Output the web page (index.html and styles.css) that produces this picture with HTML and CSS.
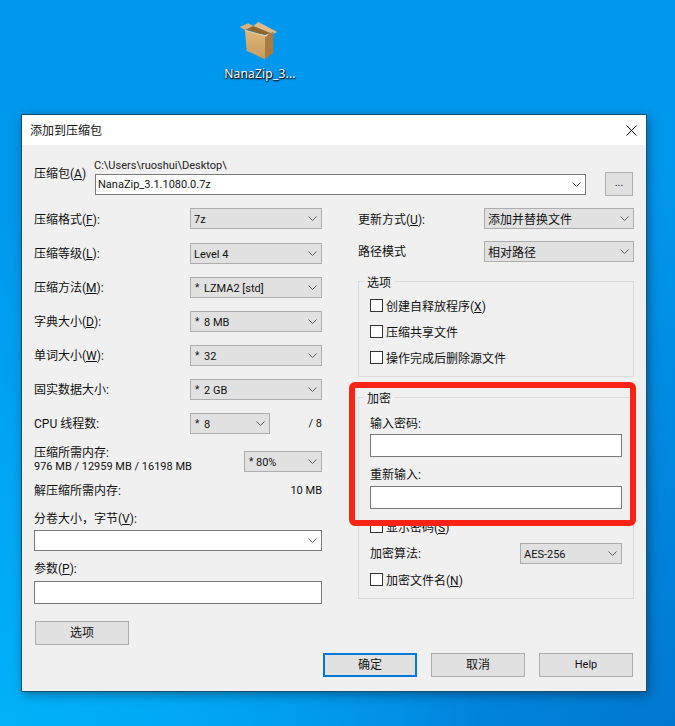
FILE: index.html
```html
<!DOCTYPE html>
<html lang="zh-CN">
<head>
<meta charset="utf-8">
<title>添加到压缩包</title>
<link rel="stylesheet" href="styles.css">
</head>
<body>
<svg width="0" height="0" class="defs">
  <defs>
    <symbol id="chev" viewBox="0 0 9 5"><path d="M.5.5 4.5 4.5 8.5.5" fill="none" stroke="#5a5a5a" stroke-width="1"/></symbol>
    <linearGradient id="boxface" x1="0" y1="0" x2="0" y2="1"><stop offset="0" stop-color="#e0b67e"/><stop offset="1" stop-color="#c89a5c"/></linearGradient>
  </defs>
</svg>
<div class="desktop-icon">
  <svg class="box-icon" viewBox="87 30 126 126" width="42" height="42">
    <polygon points="105,58 148,42 190,65 165,75" fill="#8c6534"/>
    <polygon points="90,50 115,40 130,48 105,60" fill="#d9b07a"/>
    <polygon points="130,48 145,36 202,66 188,72" fill="#e2bc88"/>
    <polygon points="105,60 165,76 165,148 110,122" fill="url(#boxface)"/>
    <polygon points="165,76 190,66 190,128 165,148" fill="#a97b43"/>
    <polygon points="105,60 165,76 178,70 168,80 104,62" fill="#f0d4a6"/>
  </svg>
  <div class="icon-label">NanaZip_3...</div>
</div>

<div class="dialog">
  <div class="titlebar">
    <span class="title">添加到压缩包</span>
    <svg class="close" viewBox="0 0 11 11" width="11" height="11"><path d="M.5.5 10.5 10.5M10.5.5.5 10.5" stroke="#111" stroke-width="1" fill="none"/></svg>
  </div>
  <div class="content">
    <div class="archive">
      <span class="archive-label">压缩包(<u>A</u>)</span>
      <div class="archive-path">
        <div class="path-text lt">C:\Users\ruoshui\Desktop\</div>
        <div class="combo"><span class="lt">NanaZip_3.1.1080.0.7z</span><svg class="chev"><use href="#chev"/></svg></div>
      </div>
      <div class="btn browse">...</div>
    </div>

    <div class="columns">
      <div class="col-left">
        <div class="row first"><span class="lower">压缩格式(<u>F</u>):</span><div class="select w132"><span class="lt">7z</span><svg class="chev"><use href="#chev"/></svg></div></div>
        <div class="row"><span>压缩等级(<u>L</u>):</span><div class="select w132"><span class="lt">Level 4</span><svg class="chev"><use href="#chev"/></svg></div></div>
        <div class="row"><span>压缩方法(<u>M</u>):</span><div class="select w132"><span class="star">*</span><span class="lt">LZMA2 [std]</span><svg class="chev"><use href="#chev"/></svg></div></div>
        <div class="row"><span>字典大小(<u>D</u>):</span><div class="select w132"><span class="star">*</span><span class="lt">8 MB</span><svg class="chev"><use href="#chev"/></svg></div></div>
        <div class="row"><span>单词大小(<u>W</u>):</span><div class="select w132"><span class="star">*</span><span class="lt">32</span><svg class="chev"><use href="#chev"/></svg></div></div>
        <div class="row"><span>固实数据大小:</span><div class="select w132"><span class="star">*</span><span class="lt">2 GB</span><svg class="chev"><use href="#chev"/></svg></div></div>
        <div class="row cpu">
          <span class="cpu-label">CPU 线程数:</span>
          <div class="select w80"><span class="star">*</span><span class="lt">8</span><svg class="chev"><use href="#chev"/></svg></div>
          <span class="cpu-max lt">/ 8</span>
        </div>
        <div class="memory">
          <div class="memory-text">
            <div>压缩所需内存:</div>
            <div class="lt">976 MB / 12959 MB / 16198 MB</div>
          </div>
          <div class="select w78"><span class="star tight">*</span><span class="lt">80%</span><svg class="chev"><use href="#chev"/></svg></div>
        </div>
        <div class="decompress"><span>解压缩所需内存:</span><span class="lt">10 MB</span></div>
        <div class="field-label volume-label">分卷大小，字节(<u>V</u>):</div>
        <div class="combo empty"><svg class="chev"><use href="#chev"/></svg></div>
        <div class="field-label param-label">参数(<u>P</u>):</div>
        <div class="input"></div>
        <div class="btn options-btn">选项</div>
      </div>

      <div class="col-right">
        <div class="row tight-row"><span class="lower">更新方式(<u>U</u>):</span><div class="select w150"><span class="lower">添加并替换文件</span><svg class="chev"><use href="#chev"/></svg></div></div>
        <div class="row tight-row path-row"><span>路径模式</span><div class="select w150"><span class="lower">相对路径</span><svg class="chev"><use href="#chev"/></svg></div></div>

        <fieldset class="group options-group">
          <legend>选项</legend>
          <label class="check"><span class="box"></span>创建自释放程序(<u>X</u>)</label>
          <label class="check"><span class="box"></span>压缩共享文件</label>
          <label class="check"><span class="box"></span>操作完成后删除源文件</label>
        </fieldset>

        <fieldset class="group encrypt-group">
          <legend>加密</legend>
          <div class="enc-label pass-label">输入密码:</div>
          <div class="input enc-input"></div>
          <div class="enc-label again-label">重新输入:</div>
          <div class="input enc-input"></div>
          <label class="check show-pass"><span class="box"></span>显示密码(<u>S</u>)</label>
          <div class="row algo"><span>加密算法:</span><div class="select w102"><span class="lt">AES-256</span><svg class="chev"><use href="#chev"/></svg></div></div>
          <label class="check enc-name"><span class="box"></span>加密文件名(<u>N</u>)</label>
        </fieldset>
      </div>
    </div>

    <div class="footer">
      <div class="btn default">确定</div>
      <div class="btn">取消</div>
      <div class="btn lt">Help</div>
    </div>
  </div>
  <div class="highlight"></div>
</div>
</body>
</html>
```

FILE: styles.css
```css
* { box-sizing: border-box; }

html, body { height: 726px; }

body {
  margin: 0;
  overflow: hidden;
  font-family: Roboto, "Noto Sans CJK SC", sans-serif;
  font-size: 12px;
  line-height: 16px;
  color: #111;
  background:
    radial-gradient(ellipse at 0% 100%, #00b2f8 0, rgba(0, 178, 248, 0) 50%),
    radial-gradient(ellipse at 100% 100%, #0078d0 0, rgba(0, 120, 208, 0) 55%),
    #0098ee;
}

.defs { position: absolute; }

u { text-decoration-thickness: 1px; text-underline-offset: 1px; }

.lt { font-size: 11px; }

.lower { padding-top: 2px; }

.select .lt { padding-top: 2px; }

.desktop-icon {
  height: 114px;
  width: 72px;
  margin-left: 224px;
  padding-top: 20px;
  display: flex;
  flex-direction: column;
  align-items: center;
}

.box-icon { display: block; }

.icon-label {
  margin-top: 4px;
  font-family: "Noto Sans", sans-serif;
  letter-spacing: .2px;
  color: #fff;
  white-space: nowrap;
  text-shadow: 0 1px 2px #000, 1px 1px 1px rgba(0, 0, 0, .8);
}

.dialog {
  position: relative;
  width: 626px;
  height: 578px;
  margin-left: 21px;
  background: #f0f0f0;
  border: 1px solid #17506c;
  box-shadow: 2px 3px 10px rgba(0, 0, 0, .35);
}

.titlebar {
  height: 30px;
  background: #fff;
  display: flex;
  align-items: center;
  justify-content: space-between;
  padding: 1px 9px 0 8px;
}

.close { display: block; margin-top: -1px; }

.content { padding: 0 12px; }

.archive {
  display: flex;
  align-items: flex-end;
  padding-top: 11px;
  height: 50px;
}

.archive-label { width: 61px; margin-bottom: 13px; }

.archive-path { width: 491px; }

.path-text { height: 15px; line-height: 14px; color: #222; margin-left: -1px; }

.combo, .input {
  background: #fff;
  border: 1px solid #7a7a7a;
}

.combo {
  height: 21px;
  display: flex;
  align-items: center;
  justify-content: space-between;
  padding: 0 4px 0 2px;
}

.combo.empty { justify-content: flex-end; }

.input { height: 23px; }

.chev { width: 9px; height: 5px; flex: none; margin-left: auto; }

.btn {
  width: 94px;
  height: 24px;
  background: #e1e1e1;
  border: 1px solid #adadad;
  display: flex;
  align-items: center;
  justify-content: center;
}

.browse { width: 28px; margin: 0 0 -1px 19px; padding-bottom: 3px; font-size: 11px; }

.columns {
  display: flex;
  gap: 36px;
  height: 437px;
  margin: 13px 0 8px;
}

.col-left { width: 288px; display: flex; flex-direction: column; }

.col-right { width: 276px; display: flex; flex-direction: column; }

.row {
  height: 21px;
  flex: none;
  display: flex;
  align-items: center;
  justify-content: space-between;
  margin-bottom: 13px;
}

.row.first { margin-bottom: 14px; }

.row.tight-row { margin-bottom: 12px; }
.row.path-row { margin-bottom: 11px; }

.select {
  height: 21px;
  flex: none;
  background: #e1e1e1;
  border: 1px solid #adadad;
  display: flex;
  align-items: center;
  padding: 0 4px 0 3px;
}

.star { width: 10px; padding-left: 1px; height: 14px; font-size: 10px; line-height: 13px; }
.star.tight { width: 8px; }

.w132 { width: 132px; }
.w80 { width: 80px; }
.w78 { width: 78px; }
.w150 { width: 150px; }
.w102 { width: 102px; }

.cpu { justify-content: flex-start; margin-bottom: 11px; }
.cpu-label { width: 156px; }
.cpu-max { margin-left: auto; }

.memory {
  height: 28px;
  display: flex;
  justify-content: space-between;
  align-items: flex-start;
}

.memory-text { line-height: 14px; white-space: nowrap; margin-top: 1px; }
.memory .select { margin-top: 6px; }

.decompress {
  display: flex;
  justify-content: space-between;
  margin-top: 10px;
}

.field-label { height: 16px; }
.volume-label { margin-top: 12px; margin-bottom: 3px; }
.param-label { margin-top: 10px; margin-bottom: 4px; }

.options-btn { margin: 17px 0 0 1px; }

.group {
  margin: 0;
  padding: 0 11px;
  border: 1px solid #dcdcdc;
  min-width: 0;
}

.group legend {
  margin-left: -6px;
  padding: 0 3px;
  height: 16px;
  line-height: 20px;
}

.options-group { padding-top: 10px; padding-bottom: 12px; }

.encrypt-group { margin-top: 12px; padding-bottom: 12px; }

.check {
  display: flex;
  align-items: flex-start;
  height: 13px;
  line-height: 16px;
  white-space: nowrap;
}

.options-group .check + .check { margin-top: 13px; }

.box {
  width: 13px;
  height: 13px;
  flex: none;
  background: #fff;
  border: 1px solid #333;
  margin-right: 3px;
}

.enc-label { height: 16px; }
.pass-label { margin-top: 11px; margin-bottom: 2px; }
.again-label { margin-top: 10px; margin-bottom: 3px; }

.show-pass { margin-top: 11px; }
.algo { margin: 10px 0 9px; }

.footer {
  display: flex;
  justify-content: flex-end;
  gap: 14px;
  padding-right: 1px;
}

.btn.default { border: 2px solid #0078d7; }

.highlight {
  position: absolute;
  left: 327px;
  top: 267px;
  width: 287px;
  height: 144px;
  border: 6px solid #fb2216;
  border-radius: 6px;
}
```
